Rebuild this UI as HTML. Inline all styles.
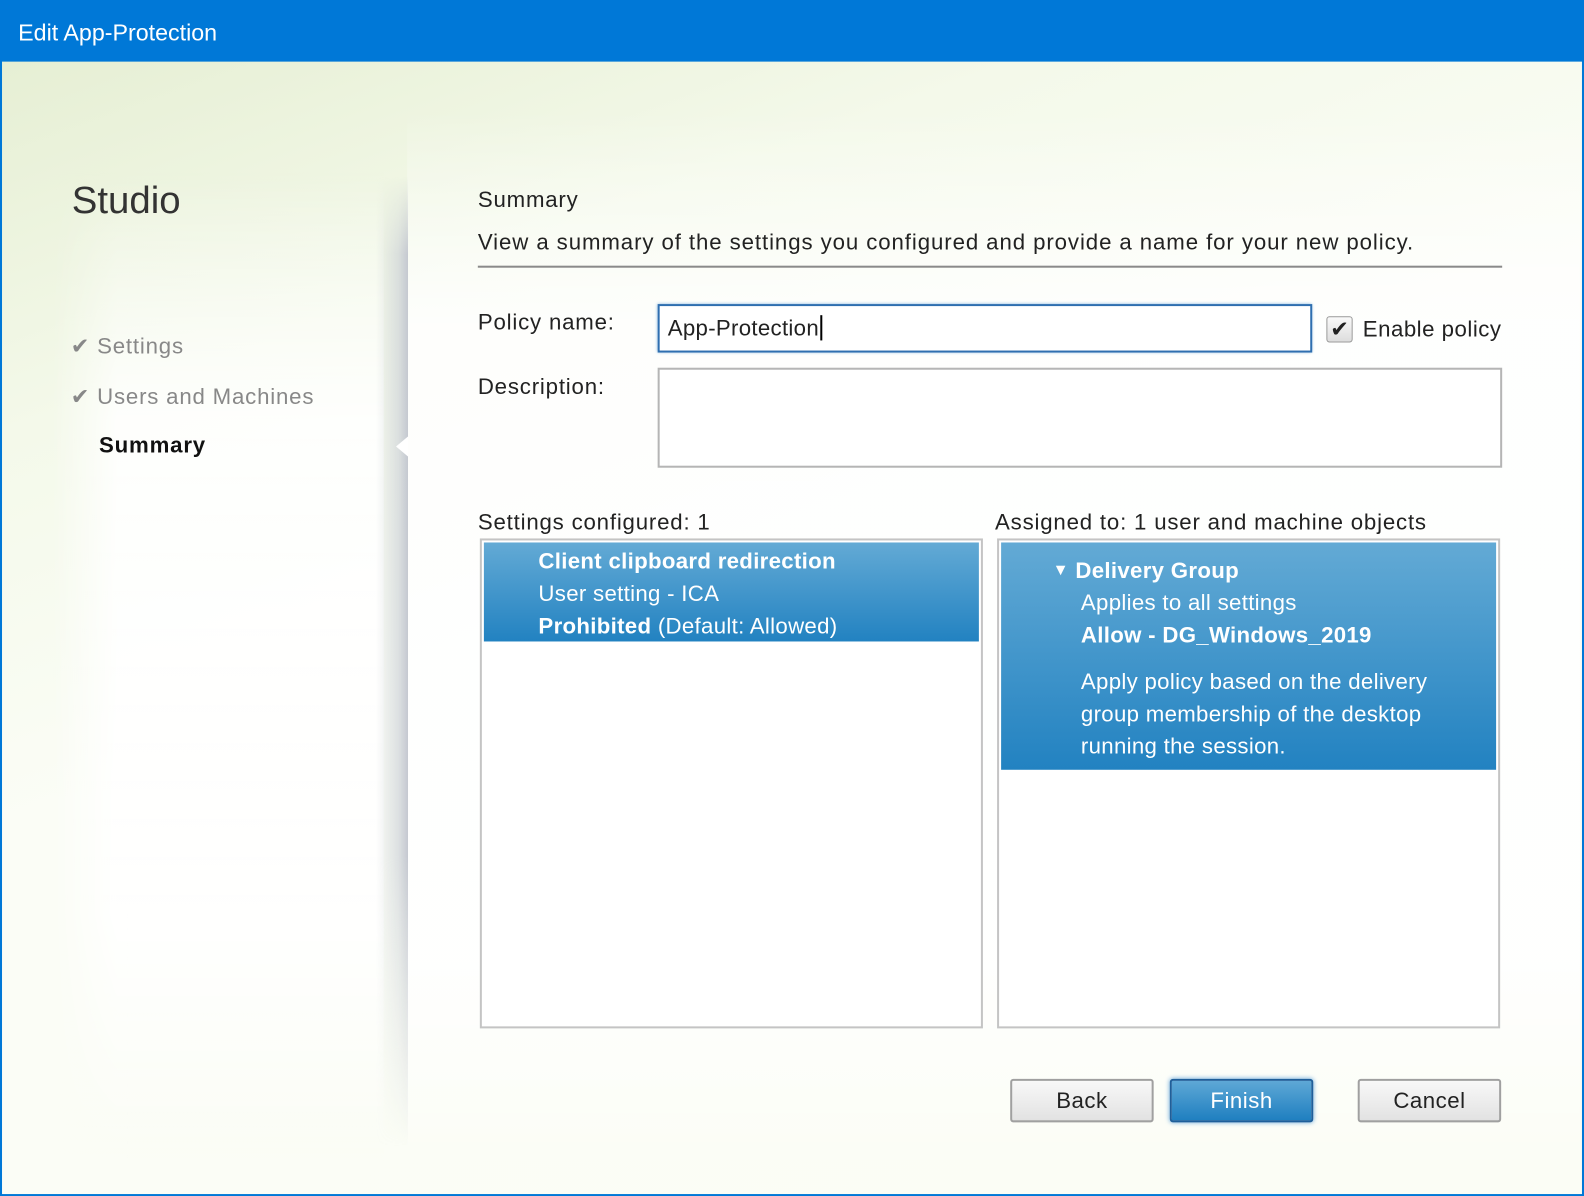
<!DOCTYPE html>
<html><head><meta charset="utf-8"><style>
*{margin:0;padding:0;box-sizing:border-box}
body{width:1584px;height:1196px;position:relative;overflow:hidden;font-family:"Liberation Sans","DejaVu Sans",sans-serif;color:#222;background:#0078d7}
#w{position:absolute;left:0;top:0;width:1568px;height:1184px;transform:scale(1.0102);transform-origin:0 0}
.win{position:absolute;left:2px;top:61px;width:1564px;height:1121px;background:linear-gradient(160deg,#e6efd4 0%,#f4f9ea 22%,#fbfdf6 45%,#fbfdf5 100%)}
.title{position:absolute;left:18px;top:19px;color:#fff;font-size:23px}
.content{position:absolute;left:403px;top:110px;width:1161px;height:1050px;background:linear-gradient(180deg,rgba(255,255,255,0) 0%,rgba(255,255,255,.85) 20%,rgba(255,255,255,.9) 80%,rgba(255,255,255,0) 100%)}
.leftw{position:absolute;left:50px;top:170px;width:330px;height:980px;background:linear-gradient(180deg,rgba(255,255,255,0) 0%,rgba(255,255,255,.85) 25%,rgba(255,255,255,.9) 75%,rgba(255,255,255,0) 100%);-webkit-mask-image:linear-gradient(90deg,transparent 0%,#000 20%,#000 100%)}
.shadow{position:absolute;left:372px;top:175px;width:32px;height:960px;background:linear-gradient(90deg,rgba(200,205,212,0),rgba(200,205,212,.6) 70%,#c4c8d0);-webkit-mask-image:linear-gradient(180deg,transparent 0%,#000 8%,#000 70%,transparent 100%)}
.t{position:absolute;white-space:nowrap;letter-spacing:.8px}
.box{position:absolute;background:#fff;border:2px solid #c4c4c4}
.sel{position:absolute;background:linear-gradient(180deg,#63aad5,#2282c1);color:#fff}
.btn{position:absolute;top:1068px;height:43px;width:142px;border:2px solid #a0a0a0;border-radius:3px;background:linear-gradient(#f8f8f8,#e2e2e2);font-size:22px;text-align:center;line-height:40px;color:#222;letter-spacing:.5px}
</style></head><body>
<div id="w">
<div class="title">Edit App-Protection</div>
<div class="win"></div>
<div class="content"></div>
<div class="leftw"></div>
<div class="shadow"></div>
<div style="position:absolute;left:392px;top:432px;width:0;height:0;border-top:10px solid transparent;border-bottom:10px solid transparent;border-right:12px solid #fff"></div>
<div class="t" style="left:71px;top:178px;font-size:38px;color:#333;letter-spacing:0">Studio</div>
<div class="t" style="left:70px;top:330px;font-size:22px;color:#888">✔ Settings</div>
<div class="t" style="left:70px;top:380px;font-size:22px;color:#888">✔ Users and Machines</div>
<div class="t" style="left:98px;top:428px;font-size:22px;font-weight:bold;color:#111">Summary</div>
<div class="t" style="left:473px;top:185px;font-size:22px">Summary</div>
<div class="t" style="left:473px;top:227px;font-size:22px;letter-spacing:.9px">View a summary of the settings you configured and provide a name for your new policy.</div>
<div style="position:absolute;left:473px;top:263px;width:1014px;height:2px;background:#8a8a8a"></div>
<div class="t" style="left:473px;top:306px;font-size:22px">Policy name:</div>
<div style="position:absolute;left:651px;top:301px;width:648px;height:48px;background:#fff;border:2px solid #2f6fb0;box-shadow:0 0 3px #7fb3e0"></div>
<div class="t" style="left:661px;top:312px;font-size:22px;letter-spacing:.3px">App-Protection<span style="border-left:2px solid #000;margin-left:1px"></span></div>
<div style="position:absolute;left:1313px;top:313px;width:26px;height:26px;border:1px solid #999;border-radius:3px;background:linear-gradient(#fafafa,#ddd);font-size:22px;line-height:24px;text-align:center;color:#222">✔</div>
<div class="t" style="left:1349px;top:313px;font-size:22px;letter-spacing:.5px">Enable policy</div>
<div class="t" style="left:473px;top:370px;font-size:22px">Description:</div>
<div class="box" style="left:651px;top:364px;width:836px;height:99px;border-color:#b5b5b5"></div>
<div class="t" style="left:473px;top:504px;font-size:22px">Settings configured: 1</div>
<div class="t" style="left:985px;top:504px;font-size:22px">Assigned to: 1 user and machine objects</div>
<div class="box" style="left:475px;top:533px;width:498px;height:485px"></div>
<div class="sel" style="left:479px;top:537px;width:490px;height:98px"></div>
<div class="t" style="left:533px;top:540px;font-size:22px;color:#fff;line-height:32px;letter-spacing:.3px"><b>Client clipboard redirection</b><br>User setting - ICA<br><b>Prohibited</b> (Default: Allowed)</div>
<div class="box" style="left:987px;top:533px;width:498px;height:485px"></div>
<div class="sel" style="left:991px;top:537px;width:490px;height:225px"></div>
<div class="t" style="left:1042px;top:549px;font-size:22px;color:#fff;line-height:32px;letter-spacing:.3px"><span style="font-size:16px;position:relative;top:-3px">▼</span> <b>Delivery Group</b></div>
<div class="t" style="left:1070px;top:581px;font-size:22px;color:#fff;line-height:32px;letter-spacing:.3px">Applies to all settings<br><b>Allow - DG_Windows_2019</b></div>
<div class="t" style="left:1070px;top:659px;font-size:22px;color:#fff;line-height:32px;letter-spacing:.3px">Apply policy based on the delivery<br>group membership of the desktop<br>running the session.</div>
<div class="btn" style="left:1000px">Back</div>
<div class="btn" style="left:1158px;border-color:#1f5f9a;background:linear-gradient(#5ea8d6,#1f7fc0);color:#fff;box-shadow:0 0 5px #6aa9dc">Finish</div>
<div class="btn" style="left:1344px">Cancel</div>
</div>
</body></html>
